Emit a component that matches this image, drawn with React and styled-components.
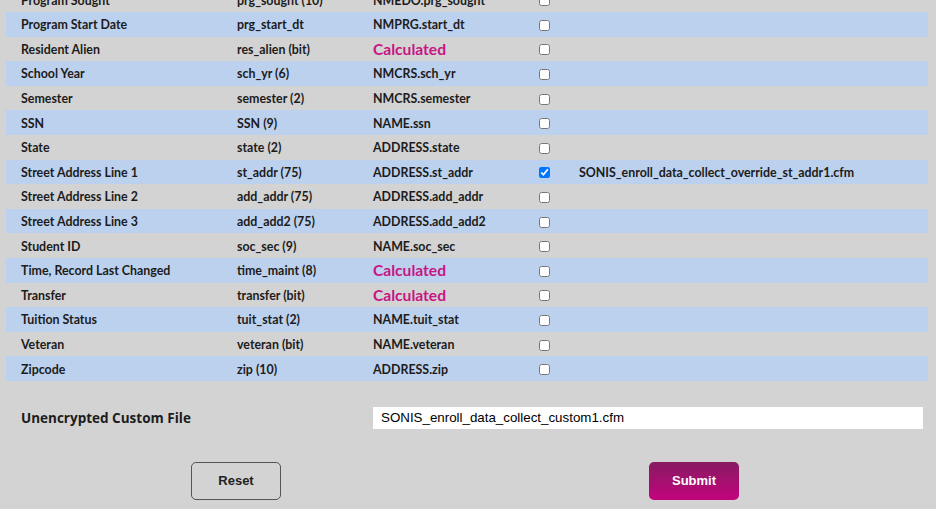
import React from "react";
import styled, { createGlobalStyle } from "styled-components";

const Global = createGlobalStyle`
  html, body { margin: 0; padding: 0; background: #d3d3d3; overflow: hidden; }
  body { font-family: Lato, "Noto Sans", sans-serif; }
`;

const Page = styled.div`
  width: 936px;
  height: 509px;
  overflow: hidden;
  background: #d3d3d3;
`;

const Table = styled.div`
  margin: -12.6px 8px 0 6px;
  display: flex;
  flex-direction: column;
`;

const Row = styled.div`
  display: grid;
  grid-template-columns: 216px 136px 166px 40px 1fr;
  align-items: center;
  height: 24.6px;
  padding-left: 15px;
  background: ${(p) => (p.$alt ? "#bcd1ee" : "transparent")};
  font-size: 12.4px;
  font-weight: 700;
  color: #1c1c1c;
`;

const Cell = styled.span`
  white-space: nowrap;
  padding-top: 1px;
`;

const Calc = styled.span`
  color: #c71585;
  font-size: 15.6px;
  font-weight: 700;
  white-space: nowrap;
`;

const Check = styled.input.attrs({ type: "checkbox" })`
  margin: 2px 0 0 0;
  width: 11px;
  height: 11px;
`;

const CustomRow = styled.div`
  display: grid;
  grid-template-columns: 352px 1fr;
  align-items: center;
  margin: 26px 13px 0 21px;
`;

const CustomLabel = styled.span`
  font-family: "Open Sans", sans-serif;
  font-weight: 700;
  font-size: 13.5px;
  color: #1c1c1c;
  padding-top: 1px;
`;

const TextBox = styled.input`
  height: 22px;
  box-sizing: border-box;
  border: none;
  outline: none;
  background: #fff;
  padding: 0 8px;
  font-family: "Liberation Sans", Arial, sans-serif;
  font-size: 13.333px;
  color: #000;
`;

const Actions = styled.div`
  display: flex;
  margin-top: 33px;
  padding-left: 191px;
  gap: 368px;
`;

const Button = styled.button`
  width: 90px;
  height: 38px;
  box-sizing: border-box;
  border-radius: 5px;
  font-family: "Liberation Sans", Arial, sans-serif;
  font-size: 13px;
  font-weight: 700;
  cursor: pointer;
  border: ${(p) => (p.$primary ? "none" : "1px solid #555")};
  color: ${(p) => (p.$primary ? "#fff" : "#222")};
  background: ${(p) =>
    p.$primary ? "linear-gradient(#861c62, #c3037c)" : "transparent"};
`;

const rows = [
  ["Program Sought", "prg_sought (10)", "NMEDO.prg_sought"],
  ["Program Start Date", "prg_start_dt", "NMPRG.start_dt"],
  ["Resident Alien", "res_alien (bit)", null],
  ["School Year", "sch_yr (6)", "NMCRS.sch_yr"],
  ["Semester", "semester (2)", "NMCRS.semester"],
  ["SSN", "SSN (9)", "NAME.ssn"],
  ["State", "state (2)", "ADDRESS.state"],
  ["Street Address Line 1", "st_addr (75)", "ADDRESS.st_addr", "SONIS_enroll_data_collect_override_st_addr1.cfm"],
  ["Street Address Line 2", "add_addr (75)", "ADDRESS.add_addr"],
  ["Street Address Line 3", "add_add2 (75)", "ADDRESS.add_add2"],
  ["Student ID", "soc_sec (9)", "NAME.soc_sec"],
  ["Time, Record Last Changed", "time_maint (8)", null],
  ["Transfer", "transfer (bit)", null],
  ["Tuition Status", "tuit_stat (2)", "NAME.tuit_stat"],
  ["Veteran", "veteran (bit)", "NAME.veteran"],
  ["Zipcode", "zip (10)", "ADDRESS.zip"],
];

export default function App() {
  return (
    <Page>
      <Global />
      <Table>
        {rows.map(([label, field, source, override], i) => (
          <Row key={label} $alt={i % 2 === 1}>
            <Cell>{label}</Cell>
            <Cell>{field}</Cell>
            {source ? <Cell>{source}</Cell> : <Calc>Calculated</Calc>}
            <Check defaultChecked={!!override} />
            <Cell>{override || ""}</Cell>
          </Row>
        ))}
      </Table>
      <CustomRow>
        <CustomLabel>Unencrypted Custom File</CustomLabel>
        <TextBox defaultValue="SONIS_enroll_data_collect_custom1.cfm" />
      </CustomRow>
      <Actions>
        <Button>Reset</Button>
        <Button $primary>Submit</Button>
      </Actions>
    </Page>
  );
}
